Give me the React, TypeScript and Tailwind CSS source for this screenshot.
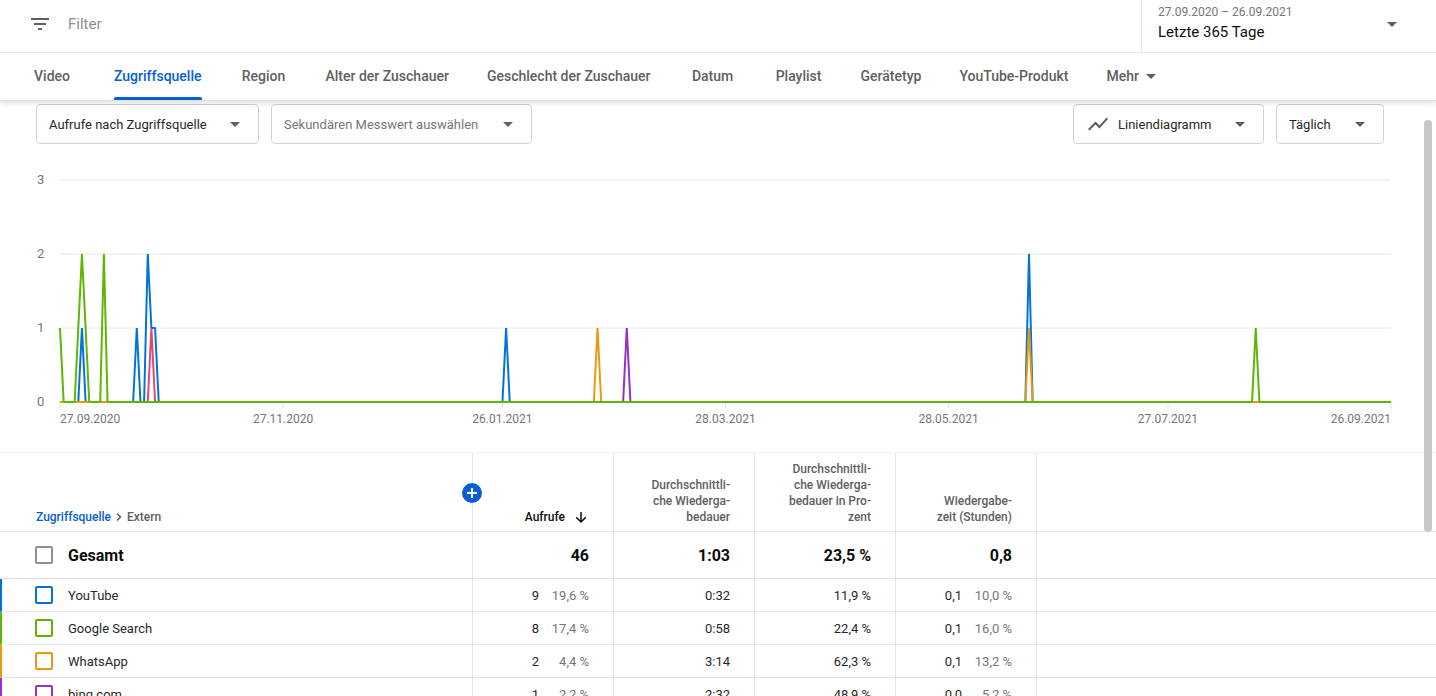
import React, { useState } from 'react';

const tabs = [
  'Video',
  'Zugriffsquelle',
  'Region',
  'Alter der Zuschauer',
  'Geschlecht der Zuschauer',
  'Datum',
  'Playlist',
  'Gerätetyp',
  'YouTube-Produkt',
];

// day index -> views, every other day is 0
// painted in this order, so the last one is on top
const series = [
  { id: 'youtube', stroke: '#0274d7', points: { 6: 1, 21: 1, 24: 2, 25: 1, 26: 1, 122: 1, 265: 2 } },
  { id: 'facebook', stroke: '#df4a74', points: { 25: 1 } },
  { id: 'bing', stroke: '#9334c4', points: { 155: 1 } },
  { id: 'whatsapp', stroke: '#e99a0f', points: { 147: 1, 265: 1 } },
  { id: 'google', stroke: '#60b505', points: { 0: 1, 5: 1, 6: 2, 7: 1, 12: 2, 327: 1 } },
] as { id: string; stroke: string; points: Record<number, number> }[];

const lastDay = 364;
const unit = 74;

const ticks = [
  { day: 0, label: '27.09.2020' },
  { day: 61, label: '27.11.2020' },
  { day: 121, label: '26.01.2021' },
  { day: 182, label: '28.03.2021' },
  { day: 243, label: '28.05.2021' },
  { day: 303, label: '27.07.2021' },
  { day: 364, label: '26.09.2021' },
];

const rows = [
  { name: 'YouTube', bar: 'border-l-[#0274d7]', box: 'border-[#0274d7] checked:bg-[#0274d7]', views: '9', viewShare: '19,6 %', duration: '0:32', percent: '11,9 %', hours: '0,1', hourShare: '10,0 %' },
  { name: 'Google Search', bar: 'border-l-[#60b505]', box: 'border-[#60b505] checked:bg-[#60b505]', views: '8', viewShare: '17,4 %', duration: '0:58', percent: '22,4 %', hours: '0,1', hourShare: '16,0 %' },
  { name: 'WhatsApp', bar: 'border-l-[#e99a0f]', box: 'border-[#e99a0f] checked:bg-[#e99a0f]', views: '2', viewShare: '4,4 %', duration: '3:14', percent: '62,3 %', hours: '0,1', hourShare: '13,2 %' },
  { name: 'bing.com', bar: 'border-l-[#9334c4]', box: 'border-[#9334c4] checked:bg-[#9334c4]', views: '1', viewShare: '2,2 %', duration: '2:32', percent: '48,9 %', hours: '0,0', hourShare: '5,2 %' },
];

const linePoints = (points: Record<number, number>) => {
  const list: string[] = [];
  for (let day = 0; day <= lastDay; day++) {
    list.push(`${day},${(3 - (points[day] ?? 0)) * unit}`);
  }
  return list.join(' ');
};

const Arrow: React.FC<{ className?: string }> = ({ className = '' }) => (
  <svg viewBox="0 0 24 24" className={`h-6 w-6 fill-[#606060] ${className}`} aria-hidden="true">
    <path d="M7 10l5 5 5-5z" />
  </svg>
);

interface DropdownProps {
  label: string;
  options: string[];
  width: string;
  text?: string;
  icon?: React.ReactNode;
}

const Dropdown: React.FC<DropdownProps> = ({ label, options, width, text = 'pl-3 text-[#282828]', icon }) => (
  <div className={`relative h-10 ${width}`}>
    {icon}
    <select
      aria-label={label}
      className={`h-full w-full appearance-none rounded border border-[#d3d3d3] bg-transparent pr-10 pt-[2px] text-[13px] ${text}`}
    >
      {options.map((option) => (
        <option key={option}>{option}</option>
      ))}
    </select>
    <Arrow className="pointer-events-none absolute right-3 top-2" />
  </div>
);

const Chart: React.FC = () => (
  <div className="flex pl-[37px] pr-[45px] pt-9 text-xs text-[#767676]">
    <div className="-mt-2 flex h-[238px] w-[23px] flex-col justify-between text-[13px] leading-4">
      <span>3</span>
      <span>2</span>
      <span>1</span>
      <span>0</span>
    </div>
    <div className="min-w-0 flex-1">
      <svg
        viewBox="0 0 364 222"
        preserveAspectRatio="none"
        className="block h-[222px] w-full overflow-visible"
        role="img"
        aria-label="Aufrufe pro Tag"
      >
        {[0, 1, 2, 3].map((line) => (
          <path key={line} d={`M0 ${line * unit}H364`} stroke="#e6e6e6" strokeWidth="1" vectorEffect="non-scaling-stroke" />
        ))}
        {ticks.map(({ day }) => (
          <path key={day} d={`M${day} 222V228`} stroke="#e0e0e0" strokeWidth="1" vectorEffect="non-scaling-stroke" />
        ))}
        {series.map((line) => (
          <polyline
            key={line.id}
            points={linePoints(line.points)}
            fill="none"
            stroke={line.stroke}
            strokeWidth="2"
            strokeLinejoin="bevel"
            vectorEffect="non-scaling-stroke"
          />
        ))}
      </svg>
      <div className="relative h-[50px]">
        {ticks.map(({ day, label }) => (
          <span
            key={day}
            className={`absolute top-[9px] leading-4 ${day === 0 ? '' : day === lastDay ? '-translate-x-full' : '-translate-x-1/2'}`}
            style={{ left: `${(day / lastDay) * 100}%` }}
          >
            {label}
          </span>
        ))}
      </div>
    </div>
  </div>
);

const head = 'border-b border-r border-[#e5e5e5] pb-[6px] pt-2 pr-6 text-right align-bottom text-xs leading-4 font-medium';
const total = 'h-[47px] border-b border-r border-[#e5e5e5] pt-[2px] pr-6 text-right text-base font-bold text-[#0d0d0d]';
const cell = 'h-[33px] border-b border-r border-[#e5e5e5] pt-[2px] pr-6 text-right';
const checkbox = 'block h-[18px] w-[18px] appearance-none rounded-xs border-2';

const DataTable: React.FC = () => (
  <table className="w-full table-fixed border-separate border-spacing-0 border-t border-[#f0f0f0] text-[13px] text-[#282828]">
    <colgroup>
      <col className="w-[473px]" />
      <col className="w-[141px]" />
      <col className="w-[141px]" />
      <col className="w-[141px]" />
      <col className="w-[141px]" />
      <col />
    </colgroup>
    <thead>
      <tr className="text-[#606060]">
        <th className="relative border-b border-r border-[#e5e5e5] pb-[6px] pl-9 text-left align-bottom text-xs leading-4 font-medium">
          <nav className="flex items-center">
            <a href="#zugriffsquelle" className="text-[#065fd4]">Zugriffsquelle</a>
            <svg viewBox="0 0 16 16" className="h-4 w-4 fill-none stroke-[#606060] stroke-[1.5]" aria-hidden="true">
              <path d="M6 4.5L9.5 8L6 11.5" />
            </svg>
            <span>Extern</span>
          </nav>
          <button
            type="button"
            aria-label="Messwert hinzufügen"
            className="absolute -right-[10px] top-[30px] z-10 flex h-5 w-5 items-center justify-center rounded-full bg-[#065fd4]"
          >
            <svg viewBox="0 0 12 12" className="h-3 w-3 fill-none stroke-white stroke-2" aria-hidden="true">
              <path d="M6 1V11M1 6H11" />
            </svg>
          </button>
        </th>
        <th className={head}>
          <button type="button" className="inline-flex items-center gap-2 text-[#0d0d0d]">
            Aufrufe
            <svg viewBox="0 0 16 16" className="h-4 w-4 fill-none stroke-[#0d0d0d] stroke-[1.5]" aria-hidden="true">
              <path d="M8 3V13M3.2 8.2L8 13L12.8 8.2" />
            </svg>
          </button>
        </th>
        <th className={head}>Durchschnittli-<br />che Wiederga-<br />bedauer</th>
        <th className={head}>Durchschnittli-<br />che Wiederga-<br />bedauer in Pro-<br />zent</th>
        <th className={head}>Wiedergabe-<br />zeit (Stunden)</th>
        <th className="border-b border-[#e5e5e5]" />
      </tr>
    </thead>
    <tbody>
      <tr>
        <td className="border-b border-r border-[#e5e5e5] pl-[35px]">
          <label className="flex items-center gap-[15px] text-base font-bold text-[#0d0d0d]">
            <input type="checkbox" className={`${checkbox} border-[#909090] checked:bg-[#909090]`} />
            <span className="pt-[2px]">Gesamt</span>
          </label>
        </td>
        <td className={total}>46</td>
        <td className={total}>1:03</td>
        <td className={total}>23,5 %</td>
        <td className={total}>0,8</td>
        <td className="border-b border-[#e5e5e5]" />
      </tr>
      {rows.map((row) => (
        <tr key={row.name}>
          <td className={`border-b border-l-2 border-r border-[#e5e5e5] pl-[33px] ${row.bar}`}>
            <label className="flex items-center gap-[15px]">
              <input type="checkbox" className={`${checkbox} ${row.box}`} />
              <span className="pt-[2px]">{row.name}</span>
            </label>
          </td>
          <td className={cell}>
            {row.views}
            <span className="inline-block w-[50px] text-[#767676]">{row.viewShare}</span>
          </td>
          <td className={cell}>{row.duration}</td>
          <td className={cell}>{row.percent}</td>
          <td className={cell}>
            {row.hours}
            <span className="inline-block w-[50px] text-[#767676]">{row.hourShare}</span>
          </td>
          <td className="border-b border-[#e5e5e5]" />
        </tr>
      ))}
    </tbody>
  </table>
);

const App: React.FC = () => {
  const [activeTab, setActiveTab] = useState('Zugriffsquelle');

  return (
    <div className="flex h-screen flex-col overflow-hidden bg-white font-[Roboto,sans-serif]">
      <header className="relative z-20 border-b border-[#e0e0e0] bg-white shadow-[0_2px_6px_rgba(0,0,0,0.14)]">
        <div className="flex h-[53px] border-b border-[#e5e5e5]">
          <label className="flex flex-1 items-center gap-4 pb-1 pl-7">
            <svg viewBox="0 0 24 24" className="h-6 w-6 fill-[#606060]" aria-hidden="true">
              <path d="M10 18h4v-2h-4v2zM3 6v2h18V6H3zm3 7h12v-2H6v2z" />
            </svg>
            <input
              type="text"
              aria-label="Filter"
              placeholder="Filter"
              className="h-6 flex-1 text-[15px] outline-none placeholder:text-[#909090]"
            />
          </label>
          <button
            type="button"
            className="flex w-[295px] items-center justify-between border-l border-[#e5e5e5] pb-1 pl-4 pr-8 text-left"
          >
            <span className="pb-1">
              <span className="block text-xs leading-5 text-[#767676]">27.09.2020 – 26.09.2021</span>
              <span className="block text-[15px] leading-5 text-[#0d0d0d]">Letzte 365 Tage</span>
            </span>
            <Arrow />
          </button>
        </div>
        <nav className="flex h-[47px] items-stretch gap-[38px] pl-7 text-sm font-medium text-[#606060]">
          {tabs.map((tab) => (
            <button
              key={tab}
              type="button"
              onClick={() => setActiveTab(tab)}
              className={`relative min-w-12 whitespace-nowrap pb-[2px] ${tab === activeTab ? 'text-[#065fd4]' : ''}`}
            >
              {tab}
              {tab === activeTab && <span className="absolute inset-x-0 bottom-0 h-[3px] rounded-t-xs bg-[#065fd4]" />}
            </button>
          ))}
          <button type="button" className="flex items-center pb-[2px]">
            Mehr
            <Arrow />
          </button>
        </nav>
      </header>

      <main className="relative min-h-0 flex-1 overflow-hidden">
        <div className="flex gap-3 pl-9 pr-[52px] pt-[3px]">
          <Dropdown label="Messwert" width="w-[223px]" options={['Aufrufe nach Zugriffsquelle']} />
          <Dropdown
            label="Sekundärer Messwert"
            width="w-[261px]"
            text="pl-3 text-[#767676]"
            options={['Sekundären Messwert auswählen']}
          />
          <div className="flex-1" />
          <Dropdown
            label="Diagrammtyp"
            width="w-[191px]"
            text="pl-11 text-[#282828]"
            options={['Liniendiagramm']}
            icon={
              <svg viewBox="0 0 24 24" className="absolute left-[13px] top-2 h-6 w-6 fill-[#606060]" aria-hidden="true">
                <path d="M3.5 18.49l6-6.01 4 4L22 6.92l-1.41-1.41-7.09 7.97-4-4L2 16.99z" />
              </svg>
            }
          />
          <Dropdown label="Intervall" width="w-[108px]" options={['Täglich']} />
        </div>
        <Chart />
        <DataTable />
        <div className="absolute right-1 top-[19px] h-[412px] w-2 rounded-full bg-[#c8c8c8]" />
      </main>
    </div>
  );
};

export default App;
